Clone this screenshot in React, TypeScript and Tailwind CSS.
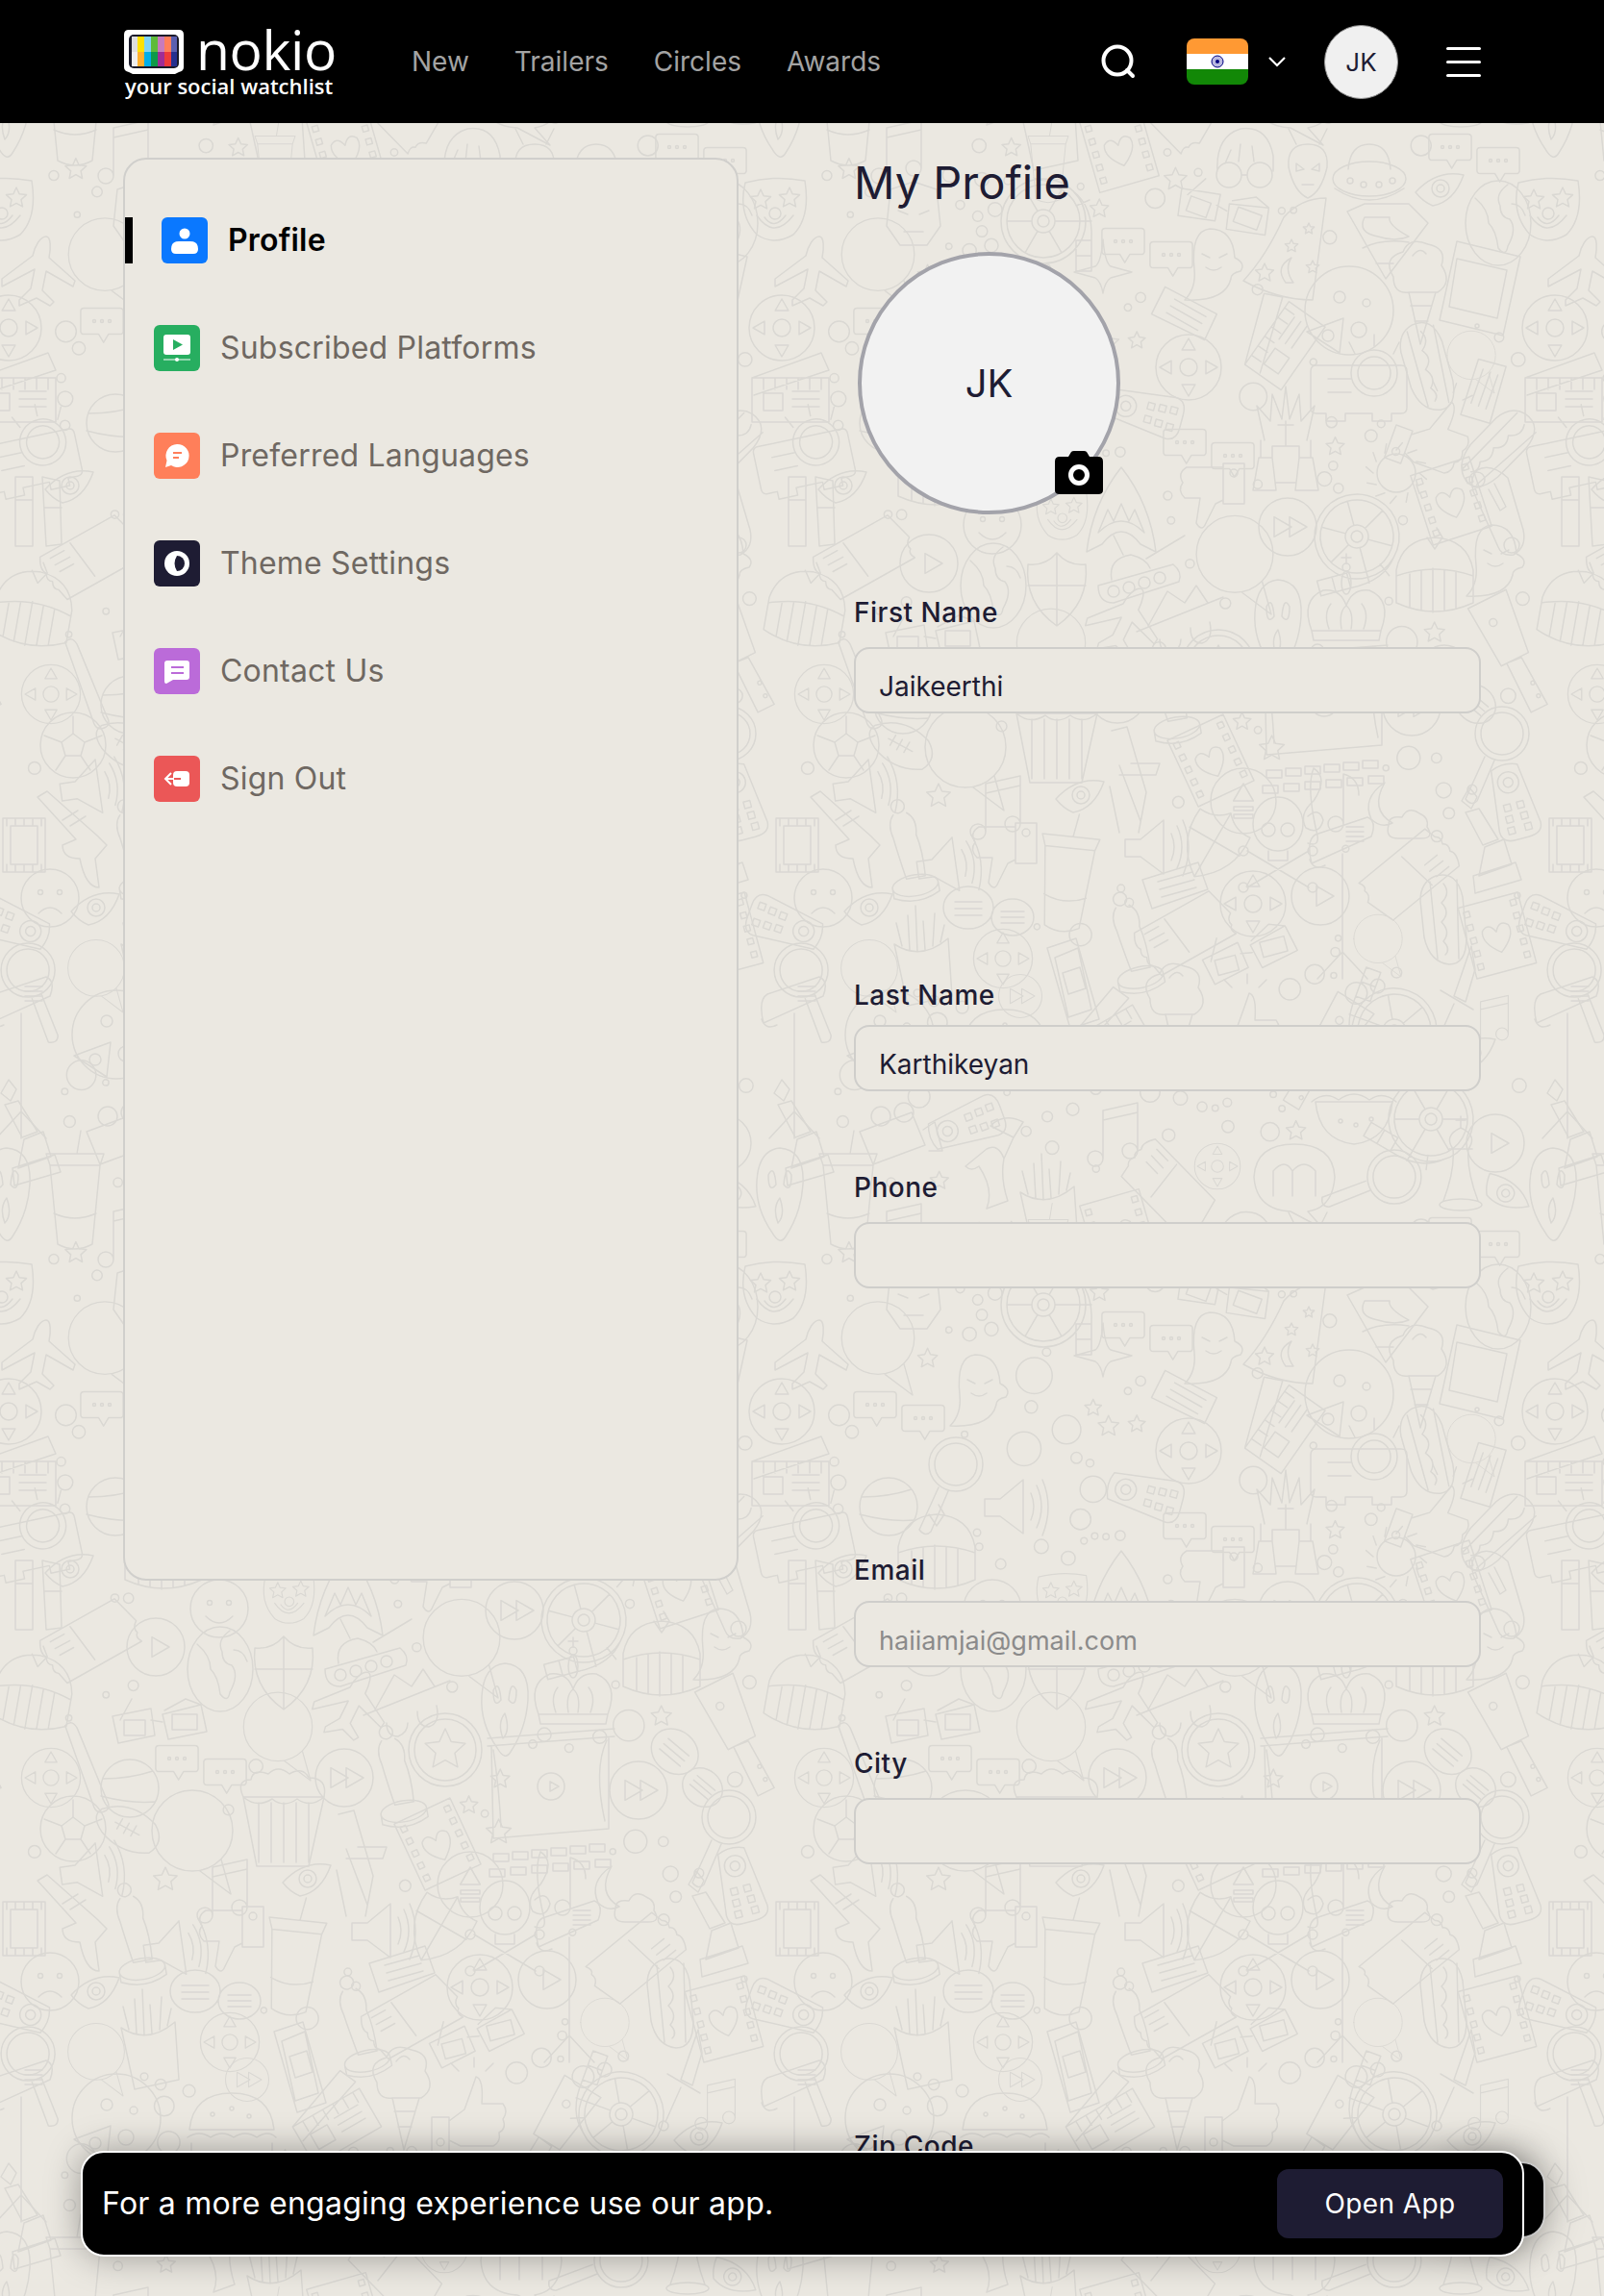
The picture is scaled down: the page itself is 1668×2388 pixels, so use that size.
import React from "react";

// path helpers for the wallpaper doodles
const c = (x: number, y: number, r: number) =>
  `M${x - r} ${y}a${r} ${r} 0 1 0 ${2 * r} 0a${r} ${r} 0 1 0 ${-2 * r} 0Z`;
const e = (x: number, y: number, rx: number, ry: number) =>
  `M${x - rx} ${y}a${rx} ${ry} 0 1 0 ${2 * rx} 0a${rx} ${ry} 0 1 0 ${-2 * rx} 0Z`;
const r = (x: number, y: number, w: number, h: number) => `M${x} ${y}h${w}v${h}h${-w}Z`;
const star = (x: number, y: number, R: number) => {
  const pts: string[] = [];
  for (let i = 0; i < 10; i++) {
    const a = (i * Math.PI) / 5 - Math.PI / 2;
    const q = i % 2 ? R * 0.48 : R;
    pts.push(`${(x + q * Math.cos(a)).toFixed(1)} ${(y + q * Math.sin(a)).toFixed(1)}`);
  }
  return `M${pts.join("L")}Z`;
};
const tri = (x: number, y: number, s: number, a: number) => {
  const pts = [0, 1, 2].map((i) => {
    const t = a + (i * 2 * Math.PI) / 3;
    return `${(x + s * Math.cos(t)).toFixed(1)} ${(y + s * Math.sin(t)).toFixed(1)}`;
  });
  return `M${pts.join("L")}Z`;
};
const holes = (x: number, y: number, n: number, step: number) =>
  Array.from({ length: n }, (_, i) => r(x, y + i * step, 6, 6)).join("");
const spokes = (R: number, n: number) =>
  Array.from({ length: n }, (_, i) => {
    const t = (i * 2 * Math.PI) / n;
    return `M${(12 * Math.cos(t)).toFixed(1)} ${(12 * Math.sin(t)).toFixed(1)}L${(R * Math.cos(t)).toFixed(1)} ${(R * Math.sin(t)).toFixed(1)}`;
  }).join("");
const hlines = (x: number, y: number, w: number, n: number, step: number) =>
  Array.from({ length: n }, (_, i) => `M${x} ${y + i * step}h${w}`).join("");
const vlines = (x: number, y: number, h: number, n: number, step: number) =>
  Array.from({ length: n }, (_, i) => `M${x + i * step} ${y}v${h}`).join("");

const bubble = (x: number, y: number, s: number) =>
  `M${x - 22 * s} ${y - 16 * s}h${44 * s}q${4 * s} 0 ${4 * s} ${4 * s}v${24 * s}q0 ${4 * s} ${-4 * s} ${4 * s}h${-14 * s}l${-6 * s} ${10 * s}l${-6 * s} ${-10 * s}h${-18 * s}q${-4 * s} 0 ${-4 * s} ${-4 * s}v${-24 * s}q0 ${-4 * s} ${4 * s} ${-4 * s}Z`;

const MOTIFS: Record<string, string> = {
  chats: bubble(-24, -6, 0.85) + bubble(26, 8, 0.85) + c(-32, -6, 1.5) + c(-24, -6, 1.5) + c(-16, -6, 1.5) + c(18, 8, 1.5) + c(26, 8, 1.5) + c(34, 8, 1.5),
  lines2: e(-22, -4, 26, 22) + e(24, 6, 22, 19) + hlines(-36, -10, 28, 3, 7) + hlines(12, 0, 24, 3, 6),
  reel: c(0, 0, 44) + c(0, 0, 38) + c(0, 0, 12) + c(0, 0, 6) + spokes(38, 6) + "M30 -32Q52 -16 50 20V52H34V20M34 0H50M34 -16L48 -22M34 20H50M34 36H50",
  clapper: r(-40, -8, 80, 46) + "M-40 -8L32 -34L40 -16L-38 10" + hlines(2, 6, 28, 3, 8) + r(-28, 8, 20, 18) + vlines(-28, -8, 12, 6, 12),
  plane: "M8 -38C13 -38 13 -26 11 -16L38 8L36 14L8 -2L4 18L16 30L12 34L-2 26L-20 34L-20 28L-8 16L-4 -4L-38 14L-38 6L-6 -18C-4 -28 2 -38 8 -38Z",
  clown: "M-30 -26Q0 -34 32 -28Q38 10 20 28Q0 40 -18 28Q-38 6 -30 -26Z" + star(-14, -8, 11) + star(16, -10, 11) + c(1, 6, 6) + "M-18 8Q0 34 20 8M-10 10Q0 24 12 8",
  dpad: c(0, 0, 34) + c(0, 0, 9) + tri(0, -22, 8, -Math.PI / 2) + tri(0, 22, 8, Math.PI / 2) + tri(-22, 0, 8, Math.PI) + tri(22, 0, 8, 0),
  remote: "M-38 -14L26 -22Q38 -22 38 -6L38 8Q38 22 26 22L-38 14Q-44 0 -38 -14Z" + c(-22, 0, 11) + c(-22, 0, 5) + r(0, -10, 7, 7) + r(12, -11, 7, 7) + r(24, -12, 7, 7) + r(0, 4, 7, 7) + r(12, 5, 7, 7) + r(24, 6, 7, 7),
  thumbDown: r(10, -32, 22, 42) + c(21, -22, 4) + "M10 -28H-28Q-38 -22 -32 -12Q-38 -4 -30 4H-14L-18 30Q-12 40 -8 30L2 10L10 6",
  thumbUp: r(-34, 6, 18, 36) + c(-25, 32, 4) + "M-16 10L0 -2Q8 -24 12 -36Q20 -34 18 -8H40Q46 0 40 8Q44 18 36 22Q38 32 30 36H-4L-16 30" + "M10 -46V-56M-6 -42L-14 -50M22 -42L30 -50",
  popcorn: "M-42 -16L-28 56L26 56L42 -16Z" + vlines(-26, -10, 62, 5, 13) + "M-42 -16Q-50 -34 -34 -34Q-32 -46 -16 -40Q-6 -50 6 -40Q20 -48 26 -36Q46 -36 42 -16Q28 -4 14 -14Q0 -4 -12 -14Q-28 -4 -42 -16Z",
  cup: "M-26 -26L-18 56Q0 66 18 56L26 -26ZM-30 -38H30L26 -26H-26ZM2 -38L6 -62M-22 24Q0 34 22 24",
  oscar: c(0, -50, 7) + "M-6 -42Q-14 -34 -10 -18Q-8 0 -4 26H16Q18 0 14 -18Q18 -34 8 -42" + e(4, 34, 24, 11) + "M-20 34V44Q4 56 28 44V34",
  ticket23: "M-50 -12L36 -34L52 -6Q46 0 50 6Q46 10 52 16L-34 38L-40 26Q-46 24 -44 16Q-50 14 -48 6Q-54 2 -50 -12Z" + "M-16 -18L0 22M-40 -8L-24 -12M-37 0L-20 -4M-34 8L-18 4",
  ticket: "M-34 -8L24 -26L34 2L-24 22Z" + "M-18 -6L18 -16M-16 2L20 -8M-14 10L22 0",
  globe: e(0, 0, 34, 44) + "M-24 -26Q-10 -14 -10 0Q-2 8 0 26Q8 36 10 24Q20 6 12 -4Q2 -6 2 -18Q-4 -30 10 -40M14 -20Q24 -20 28 -8",
  shield: "M-30 -24Q-12 -22 0 -36Q12 -22 30 -24Q34 16 0 40Q-34 16 -30 -24ZM0 -36V40M-30 -2H30",
  crown: "M-34 30H34L36 20H-36ZM-36 20Q-48 -12 -24 -22Q-6 -24 0 -6Q6 -24 24 -22Q48 -12 36 20M-18 18Q-24 2 -16 -8M18 18Q24 2 16 -8M-5 18Q-8 0 0 -6Q8 0 5 18" + e(0, -30, 5, 12) + c(0, -46, 4) + "M0 -50V-60M-5 -56H5",
  cleaver: "M-18 -48L24 -62L38 6L8 16ZM14 14L30 10L50 62L32 68Z" + c(38, 38, 2) + c(42, 52, 2) + c(6, -30, 4),
  magnifier: c(0, -14, 28) + c(0, -14, 22) + "M-18 10L-38 54Q-32 62 -26 56L-8 14",
  film: r(-22, -28, 44, 56) + r(-14, -20, 28, 40) + vlines(-18, -28, 8, 5, 9) + vlines(-18, 20, 8, 5, 9),
  filmHeart: r(-32, -38, 64, 76) + holes(-28, -32, 5, 14) + holes(22, -32, 5, 14) + "M0 -4Q-6 -16 -14 -8Q-18 4 0 18Q18 4 14 -8Q6 -16 0 -4Z",
  ghost: "M0 -38Q24 -38 26 -8Q38 -2 32 6Q22 8 22 14Q16 38 -26 36Q-14 24 -16 4Q-20 -36 0 -38ZM-8 -12L0 -8M18 -12L10 -8M-4 2Q4 8 12 2",
  scream: "M0 -48Q26 -46 24 -10Q22 20 6 44Q0 54 -8 40Q-26 14 -24 -14Q-22 -46 0 -48ZM-12 -20Q-6 -32 -4 -10Q-12 0 -12 -20ZM12 -20Q6 -32 4 -10Q12 0 12 -20ZM0 4Q-8 14 -2 30Q6 22 0 4Z",
  speaker: "M-30 -8L-14 -8L10 -28V28L-14 10H-30ZM18 -14Q24 0 18 14M24 -22Q34 0 24 22M30 -28Q42 0 30 30",
  note: "M-18 -24L18 -32V18M-18 -24V26" + c(-26, 26, 8) + c(10, 18, 8) + "M-18 -14L18 -22",
  note1: "M-2 26V-26Q14 -22 14 -4" + c(-10, 26, 8),
  treble: "M0 -40Q16 -30 0 -6Q-16 8 -8 22Q6 30 10 14Q6 0 -6 10M0 -40Q-8 -20 4 30Q6 42 -6 38",
  eye: "M-26 2Q-4 -22 24 -16Q14 12 -8 16Q-18 12 -26 2Z" + c(0, -2, 9) + c(0, -2, 4),
  soccer: c(0, 0, 34) + "M0 -12L12 -3L8 11H-8L-12 -3ZM0 -12V-30M12 -3L30 -10M8 11L18 26M-8 11L-18 26M-12 -3L-30 -10",
  football: "M-32 -8Q-6 -28 26 -12Q42 2 30 18Q2 30 -24 14Q-40 2 -32 -8ZM-14 0L14 4M-8 -6L-10 6M0 -4L-2 8M8 -4L6 8",
  tennis: c(0, 0, 30) + "M-28 -10Q0 -10 24 -18M-30 8Q0 16 26 14",
  bat: "M-10 -46Q-2 -52 2 -42L22 36Q26 46 18 48Q10 50 8 42Z",
  play: c(0, 0, 30) + tri(2, 0, 12, 0),
  ff: c(0, 0, 30) + tri(-8, 0, 12, 0) + tri(8, 0, 12, 0),
  eject: c(0, 0, 34) + tri(0, -6, 12, -Math.PI / 2) + r(-10, 6, 20, 4) + r(-10, 14, 20, 4),
  starCircle: c(0, 0, 38) + c(0, 0, 32) + star(0, 0, 22),
  projector: "M-44 -18H44Q50 -18 50 -12V26Q50 32 44 32H34V40H14V32H-14V40H-34V32H-44Q-50 32 -50 26V-12Q-50 -18 -44 -18Z" + c(16, -10, 24) + c(16, -10, 17) + "M-32 -4H-8M-32 10H-8M-10 -42L-4 -30M16 -50V-38M42 -42L36 -30",
  hotdog: "M-8 -46Q14 -52 20 -24L24 18Q24 46 6 46Q-14 44 -20 18L-24 -20Q-24 -40 -8 -46ZM-14 -40L-6 40M14 -42L16 40M0 -38Q8 -28 -2 -18Q8 -8 -2 2Q8 12 0 22Q8 30 2 36",
  icecream: "M-10 6L2 60L18 6ZM-8 20L14 20M-4 36L10 36" + "M-26 -10Q-38 -30 -16 -36Q-10 -52 10 -44Q30 -40 24 -22Q36 -4 20 6H-10Q-26 8 -26 -10ZM-6 -32Q2 -42 8 -34",
  stage: "M-66 -62L66 -72M-66 -54L66 -64M-62 -54L-60 42L60 32L60 -62M-60 -50Q-54 -10 -52 30M58 -60Q44 -30 56 24" + c(0, -12, 14) + tri(2, -12, 6, 0) + Array.from({ length: 6 }, (_, i) => r(-60 + i * 20, 58 - i * 2, 16, 8) + r(-64 + i * 22, 74 - i * 2, 16, 8)).join(""),
  spot: "M-34 -66Q-44 -60 -38 -36L24 -64Q30 -80 20 -84ZM-40 -40Q-36 -28 -24 -34M-6 -46V56M-6 56L-32 84M-6 56L20 84M-6 56V84" + hlines(-2, -74, 18, 4, 5),
  skull: e(0, -24, 26, 28) + c(-10, -18, 7) + c(10, -18, 7) + "M-10 4V14H10V4M-32 4L32 42M32 4L-32 42" + c(-36, 4, 5) + c(36, 4, 5) + c(-36, 42, 5) + c(36, 42, 5),
  glasses: "M-46 -12L-6 -20L-2 8L-40 16ZM6 -14L46 -24L52 4L12 12ZM-6 -8L6 -6M-38 -8L-26 -30M8 -18L30 -30L46 -24" + r(-34, -8, 22, 16) + r(16, -14, 26, 16),
  sun: c(0, 0, 20) + Array.from({ length: 12 }, (_, i) => {
    const t = (i * Math.PI) / 6;
    return `M${(24 * Math.cos(t)).toFixed(1)} ${(24 * Math.sin(t)).toFixed(1)}L${(32 * Math.cos(t + 0.2)).toFixed(1)} ${(32 * Math.sin(t + 0.2)).toFixed(1)}`;
  }).join(""),
  helmet: "M-40 26V-8Q-34 -40 0 -42Q34 -40 40 -8V26Q0 44 -40 26ZM-40 -2Q0 -16 40 -2M-26 -4V30M-14 -8V34M-2 -10V36M10 -8V34M22 -6V32M-8 -42L0 -30L8 -42L2 -52",
  speech: c(0, -6, 42) + "M30 24L40 60L8 36",
  tank: "M-44 14L34 -8Q44 0 40 10L-28 32Q-44 32 -44 14Z" + c(-28, 20, 6) + c(-12, 16, 6) + c(4, 11, 6) + c(20, 6, 6) + "M-30 8Q-34 -14 -10 -18Q6 -14 10 -4M6 -14L46 -38M-18 -18L-28 -38",
  pizza: c(0, 0, 46) + "M-6 8L-44 22L-10 44Z" + c(-22, 26, 6) + c(-10, -14, 6) + c(10, 20, 8) + c(18, -8, 4),
  trophy: "M-8 -36L12 -4L-4 2L-22 -32ZM-18 -58L-10 -48L-16 -36L-26 -44ZM-2 4L18 -4L26 22L-8 34ZM-14 34L30 20L36 38L-12 52Z",
  gun: "M-34 -44L-24 -50L28 -4L38 6L26 20L30 50Q16 50 10 20Q-8 20 -8 6L6 0Z" + "M-8 -20L8 -30M0 -14L16 -24",
  chess: e(0, 36, 22, 6) + "M-18 32Q-6 0 -8 -22H8Q6 0 18 32M-12 -22H12M-8 -22Q-18 -36 0 -44Q18 -36 8 -22M0 -44V-56M-5 -52H5",
  throne: "M-34 48L-28 14H-14L-10 48ZM34 48L28 14H14L10 48ZM-10 40H10M-14 14V2H14V14M-26 14V-4M26 14V-4M0 2V-24M-8 -20H8M-22 -4L-30 -40L-16 -24L-14 -52L-4 -26L0 -60L4 -26L14 -52L16 -24L30 -40L22 -4",
  ufo: e(0, 6, 38, 18) + "M-22 -4Q-20 -30 0 -30Q20 -30 22 -4M-36 16Q0 40 36 16" + c(-20, 8, 3) + c(-6, 12, 3) + c(10, 12, 3) + c(24, 8, 3),
  alien: "M0 -26Q22 -26 20 -2Q14 24 0 30Q-14 24 -20 -2Q-22 -26 0 -26ZM-12 -26L-20 -42M12 -26L20 -42M-12 -6L-4 0L-12 2ZM12 -6L4 0L12 2ZM-6 16H6",
  harry: c(-16, 16, 13) + c(16, 16, 13) + "M-3 16H3M-28 12Q-30 -24 -4 -32Q24 -36 30 -4L30 12M-14 -10L-20 4M-4 -16L-6 2M8 -14L10 2",
  tablet: "M-24 -54L42 -38L24 44L-42 28ZM-24 -36L28 -24L18 26L-32 14Z" + c(-3, 34, 2),
  phone: "M-18 -40L12 -50L36 34L6 44ZM-10 -30L14 -40L28 24L4 32ZM-2 -14L16 -20L22 2L4 8Z",
  burger: "M-44 0Q-40 -38 0 -38Q40 -38 44 0ZM-46 8Q-34 0 -22 8Q-10 0 2 8Q14 0 26 8Q38 0 46 8M-42 14V30H42V14" + c(-20, -16, 2) + c(0, -22, 2) + c(18, -14, 2),
  fries: "M-28 -6L-14 58L32 48L28 -12Q0 12 -28 -6ZM-20 -4L-26 -28M-12 0L-14 -36M-4 2L-6 -46M4 0L2 -30M12 -4L14 -38M20 -8L24 -26",
  moon: "M-10 -28Q-26 0 -2 14Q-14 20 -24 10Q-34 -12 -10 -28ZM4 30Q-10 30 -6 16Q-6 6 8 8Q14 -4 26 4Q36 8 34 18Q42 30 28 30Z",
  sword: "M24 -58L6 -6L18 0L28 -34ZM-8 -12L26 8M6 2L-10 38" + c(-12, 42, 5),
  car: "M-26 -44Q-12 -52 6 -36L22 18Q26 36 12 44Q0 46 -4 36L-30 -22Q-34 -36 -26 -44Z" + c(-26, -34, 8) + c(10, 34, 8) + "M-8 -30L4 -6L-2 -2L-14 -24",
  pills: r(-24, -38, 18, 72) + "M4 -38L22 -34L24 32L8 34Z" + "M-24 -14H-6M6 -6H24",
  iron: "M-24 -26L0 -34L24 -26L28 12L14 32H-14L-28 12ZM-16 -4L-6 0M16 -4L6 0M-10 18H10",
  spinner: "M0 -34Q2 -10 8 -6L30 0L8 6Q2 10 0 22Q-2 10 -8 6L-30 0L-8 -6Q-2 -10 0 -34Z",
  wizard: "M-44 26Q-20 0 -2 -40Q16 -60 42 -60L28 46Q-8 46 -44 26Z" + star(-22, 18, 10) + star(6, -10, 7) + star(24, -28, 6) + star(28, 12, 7) + "M0 28Q-12 12 6 2Q-2 14 8 28Z",
  superman: "M-36 -28L-18 -36H28L48 -16L4 42ZM-18 -22Q-26 -6 -4 -2Q14 4 28 -2Q6 -14 8 -22ZM-20 10Q0 0 28 4M-6 26H12",
  camera: "M-30 -8L24 -28L38 6L-16 26ZM36 -10L48 -18L56 12L42 12" + c(-8, -24, 10) + c(16, -28, 10),
  hat: "M-46 14L44 -22L-46 14ZM-34 8L-14 -28L4 -16L16 -34L28 -16M-22 22Q-22 36 -10 36Q0 32 0 22M10 10Q10 26 22 26Q34 22 30 4",
  chair: "M-22 -44L-6 -48L14 20L6 62M-2 -10H28L24 2H-14M-24 14L-14 62M-14 -8L8 50",
  poppins: "M-10 -42Q4 -56 24 -46L14 -30ZM14 -30L4 -8M-14 -18Q-2 -24 4 -8Q0 12 8 36L-14 44Q-6 24 -22 0Q-30 6 -36 0Z",
  m: "M-42 -6Q-40 -40 0 -40Q40 -40 42 -6Q40 26 14 30L30 48L-4 30Q-40 28 -42 -6Z" + "M-22 14V-12Q-10 -26 -2 -12V14M-2 -12Q10 -26 22 -12V14",
  bowl: "M-40 -10H40Q36 30 0 34Q-36 30 -40 -10ZM-44 -10Q-30 -22 -16 -12Q0 -24 16 -12Q30 -22 44 -10" + c(-14, 10, 2) + c(2, 14, 2) + c(18, 8, 2),
  smile: c(0, 0, 30) + c(-10, -6, 2.5) + c(10, -6, 2.5) + "M-14 8Q0 22 14 8",
  sad: c(0, 0, 30) + c(-10, -6, 2.5) + c(10, -6, 2.5) + "M-12 16Q0 4 12 16",
  shark: "M0 -48Q30 -10 36 40L20 32Q0 6 -20 32L-36 40Q-30 -10 0 -48ZM-24 20L-14 -4L-8 8L0 -10L8 8L14 -4L24 20Q0 -4 -24 20Z",
};

// [motif, x, y, rotation, scale], tile coords (x 0..804, y 130..1257)
type P = [string, number, number, number?, number?];
const PLACED: P[] = [
  ["filmHeart", 360, 155, -16], ["harry", 490, 166], ["alien", 556, 176], ["ufo", 620, 180], ["chats", 728, 159], ["glasses", 464, 223, 20],
  ["eye", 694, 198], ["clown", 1, 216], ["globe", 754, 232], ["reel", 281, 230], ["wizard", 533, 266], ["superman", 633, 248], ["icecream", 671, 298],
  ["tablet", 735, 305], ["plane", 40, 284], ["ghost", 454, 276], ["chats", 388, 257], ["clapper", 520, 351, -55], ["pizza", 599, 323], ["projector", 609, 398],
  ["hotdog", 680, 382, -10], ["speech", 726, 373, 0, 0.6], ["ticket", 741, 408, -55], ["clapper", 18, 401], ["dpad", 9, 341], ["dpad", 432, 382], ["ticket", 426, 328, 45],
  ["remote", 388, 428, 15], ["chats", 452, 466], ["throne", 533, 462], ["thumbUp", 682, 448, 20], ["hotdog", 752, 466, 50], ["projector", 31, 473, -12], ["sun", 648, 492],
  ["filmHeart", 705, 521, -18], ["car", 758, 533], ["pills", 40, 534], ["ff", 535, 548], ["reel", 607, 558, 75], ["thumbDown", 458, 514], ["shark", 362, 534],
  ["iron", 146, 223], ["note", 136, 157], ["cup", 286, 168, 0, 0.7], ["spinner", 343, 283], ["speech", 109, 270, 0, 0.9], ["eye", 73, 507], ["clown", 300, 534, 0, 0.8], ["chats", 130, 340],
  ["magnifier", 190, 410], ["ghost", 210, 320], ["speaker", 250, 440], ["tennis", 120, 440], ["helmet", 170, 490],
  ["smile", 228, 546], ["ticket23", 93, 578, -15], ["play", 162, 586], ["globe", 229, 609], ["shield", 295, 611], ["tank", 382, 595], ["speech", 480, 582, 0, 0.95],
  ["helmet", 688, 601], ["ghost", 747, 584], ["helmet", 34, 636, 10], ["glasses", 163, 670], ["plane", 365, 647, 15], ["hat", 424, 643], ["scream", 525, 651], ["crown", 596, 636],
  ["cleaver", 747, 678, -8], ["speech", 289, 674, 0, 0.85], ["bat", 84, 712, -8], ["chats", 208, 708], ["oscar", 410, 724, -10], ["starCircle", 463, 693], ["stage", 573, 743],
  ["dpad", 53, 722, 0, 0.9], ["tennis", 135, 733], ["popcorn", 295, 758], ["speech", 200, 783, 0, 1], ["soccer", 76, 775], ["football", 133, 773, 20], ["chair", 374, 804],
  ["filmHeart", 455, 791, -25], ["ff", 358, 722], ["ff", 664, 735], ["magnifier", 758, 777], ["lines2", 716, 712, 40], ["speaker", 93, 819, -8], ["note", 239, 839], ["eye", 320, 829],
  ["eject", 489, 833], ["treble", 562, 839], ["note1", 595, 831], ["moon", 646, 842], ["trophy", 742, 877], ["remote", 770, 835, 75], ["gun", 73, 873], ["film", 25, 879],
  ["oscar", 138, 888, -10], ["speaker", 180, 900, -8], ["thumbDown", 242, 888], ["cup", 306, 908, 6], ["speaker", 396, 881], ["shield", 458, 877, 30], ["skull", 525, 881], ["spot", 598, 934],
  ["ticket23", 663, 911, 155], ["sad", 52, 934], ["eye", 100, 946], ["lines2", 225, 948], ["ticket", 418, 923], ["ticket23", 427, 969, -15], ["dpad", 499, 940], ["play", 569, 932],
  ["hotdog", 697, 957], ["filmHeart", 753, 973, -15], ["remote", 11, 961, 200], ["fries", 154, 988], ["oscar", 371, 984, -12], ["glasses", 494, 998, -15], ["speech", 629, 980, 0, 0.6],
  ["speech", 100, 1011, 0, 0.7], ["dpad", 239, 997, 0, 0.9], ["phone", 303, 1026], ["ff", 257, 1036, 0, 0.75], ["magnifier", 39, 1019, -45], ["icecream", 418, 1049], ["thumbUp", 483, 1069],
  ["cleaver", 562, 1076, 50], ["reel", 646, 1072, 200], ["sword", 702, 1042], ["note", 750, 1061, 0, 0.8], ["burger", 241, 1088], ["spot", 28, 1100], ["pizza", 121, 1076], ["clapper", 343, 1072, -30], ["eye", 727, 1097],
  ["trophy", 27, 1181, 0, 1], ["camera", 120, 1185], ["remote", 202, 1169, -20], ["poppins", 236, 1213], ["note", 361, 1179], ["bowl", 604, 1156], ["reel", 684, 1164, 120], ["play", 751, 1189],
  ["ticket23", 412, 1234, 60], ["dpad", 462, 1213, 0, 0.7], ["m", 542, 1230], ["magnifier", 636, 1234, 45], ["chess", 715, 1217], ["scream", 7, 1242], ["cup", 78, 1238], ["fries", 285, 1246], ["eye", 760, 1242, 60],
];

const TW = 804;
const TH = 1127;
const Y0 = 130;

function fillers() {
  let s = 12345;
  const rnd = () => (s = (s * 16807) % 2147483647) / 2147483647;
  const taken = PLACED.map((p) => [p[1], p[2], 36 * (p[4] ?? 1)]);
  let d = "";
  for (let i = 0; i < 3000; i++) {
    const x = rnd() * TW;
    const y = Y0 + rnd() * TH;
    const k = rnd();
    const q = k < 0.3 ? 9 + rnd() * 5 : k < 0.75 ? 3 + rnd() * 5 : 9 + rnd() * 10;
    const ok = taken.every(([a, b, m]) => {
      const dx = Math.min(Math.abs(a - x), TW - Math.abs(a - x));
      const dy = Math.min(Math.abs(b - y), TH - Math.abs(b - y));
      return Math.hypot(dx, dy) > m + q + 4;
    });
    if (!ok || x < 20 || x > TW - 20 || y < Y0 + 20 || y > Y0 + TH - 20) continue;
    taken.push([x, y, q]);
    d += k < 0.3 ? star(x, y, q) : c(x, y, q);
  }
  return d;
}

function Wallpaper() {
  const items: React.ReactNode[] = [];
  PLACED.forEach(([name, x, y, rot = 0, sc = 1], i) => {
    const d = MOTIFS[name];
    const xs = x < 90 ? [x, x + TW] : x > TW - 90 ? [x, x - TW] : [x];
    const ys = y < Y0 + 90 ? [y, y + TH] : y > Y0 + TH - 90 ? [y, y - TH] : [y];
    xs.forEach((px) =>
      ys.forEach((py) =>
        items.push(<path key={`${i}-${px}-${py}`} d={d} transform={`translate(${px} ${py}) rotate(${rot}) scale(${sc})`} />)
      )
    );
  });
  return (
    <svg className="absolute inset-0" width={1668} height={2388}>
      <defs>
        <pattern id="doodles" patternUnits="userSpaceOnUse" x={0} y={Y0} width={TW} height={TH}>
          <g transform={`translate(0 ${-Y0})`} fill="none" stroke="#dad8d3" strokeWidth={1.5} strokeLinejoin="round" strokeLinecap="round">
            {items}
            <path d={fillers()} />
          </g>
        </pattern>
      </defs>
      <rect width={1668} height={2388} fill="url(#doodles)" />
    </svg>
  );
}

function Logo() {
  return (
    <div className="flex w-[224px] shrink-0 flex-col">
      <div className="flex h-[50px] items-center">
        <svg className="shrink-0" width={64} height={48} viewBox="0 0 64 48">
          <path d="M6 1H58Q63 1 63 6V40Q63 44 58 45L54 47H10L6 45Q1 44 1 40V6Q1 1 6 1Z" fill="#fff" />
          <rect x={6} y={6} width={52} height={35} rx={5} fill="#1a1a2a" />
          <g>
            <rect x={9} y={8} width={6} height={16} fill="#ddd" /><rect x={9} y={24} width={6} height={15} fill="#eee" />
            <rect x={15} y={8} width={7} height={16} fill="#ffe100" /><rect x={15} y={24} width={7} height={15} fill="#ffb02e" />
            <rect x={22} y={8} width={7} height={16} fill="#7fd4f5" /><rect x={22} y={24} width={7} height={15} fill="#00aee8" />
            <rect x={29} y={8} width={7} height={16} fill="#5ebb3a" /><rect x={29} y={24} width={7} height={15} fill="#0e9a48" />
            <rect x={36} y={8} width={7} height={16} fill="#c77bbd" /><rect x={36} y={24} width={7} height={15} fill="#a02d96" />
            <rect x={43} y={8} width={7} height={16} fill="#ff7f5a" /><rect x={43} y={24} width={7} height={15} fill="#ee3a3a" />
            <rect x={50} y={8} width={6} height={16} fill="#5a5fb0" /><rect x={50} y={24} width={6} height={15} fill="#26308f" />
          </g>
        </svg>
        <span className="-mt-[6px] ml-[12px] whitespace-nowrap font-['Open_Sans',sans-serif] text-[57px] leading-[50px] font-normal tracking-[-0.4px] text-white">nokio</span>
      </div>
      <span className="ml-[2px] -mt-[1px] font-['Open_Sans',sans-serif] text-[22px] leading-[22px] font-semibold whitespace-nowrap text-white">your social watchlist</span>
    </div>
  );
}

function Header() {
  return (
    <header className="relative z-10 flex h-[128px] items-center bg-black pl-[128px]">
      <Logo />
      <nav className="ml-[76px] flex gap-[47px] text-[28px] text-[#a3a3a3]">
        <span>New</span>
        <span>Trailers</span>
        <span>Circles</span>
        <span>Awards</span>
      </nav>
      <div className="ml-auto flex items-center pr-[128px]">
        <svg width={36} height={36} viewBox="0 0 36 36" fill="none" stroke="#fff" strokeWidth={4} strokeLinecap="round">
          <circle cx={17} cy={17} r={14.5} />
          <path d="M27 27L33 33" />
        </svg>
        <svg className="ml-[53px]" width={64} height={48} viewBox="0 0 64 48">
          <clipPath id="flagclip"><rect width={64} height={48} rx={8} /></clipPath>
          <g clipPath="url(#flagclip)">
            <rect width={64} height={16} fill="#ff9933" />
            <rect y={16} width={64} height={16} fill="#fff" />
            <rect y={32} width={64} height={16} fill="#128807" />
            <circle cx={32} cy={24} r={6} fill="#b9b9e0" stroke="#000080" strokeWidth={1} />
            <circle cx={32} cy={24} r={2} fill="#000080" />
          </g>
        </svg>
        <svg className="ml-[21px]" width={18} height={12} viewBox="0 0 18 12" fill="none" stroke="#fff" strokeWidth={2.2}>
          <path d="M1 2L9 10L17 2" />
        </svg>
        <div className="ml-[40px] flex h-[77px] w-[77px] items-center justify-center rounded-full border border-[#999] bg-[#f0f0f0] text-[26px] text-[#1e1c33]">JK</div>
        <div className="ml-[50px] flex w-[36px] flex-col gap-[11px]">
          <div className="h-[3px] rounded-full bg-white" />
          <div className="h-[3px] rounded-full bg-white" />
          <div className="h-[3px] rounded-full bg-white" />
        </div>
      </div>
    </header>
  );
}

const NAV = [
  { label: "Profile", bg: "bg-[#0a78ff]", icon: <><circle cx={24} cy={17} r={5.5} fill="#fff" /><path d="M10 33Q10 25 18 25H30Q38 25 38 33Q38 38 33 38H15Q10 38 10 33Z" fill="#fff" /></> },
  { label: "Subscribed Platforms", bg: "bg-[#27ae60]", icon: <><rect x={10} y={10} width={28} height={21} rx={3} fill="#fff" /><path d="M20 15L30 20.5L20 26Z" fill="#27ae60" /><path d="M10 36H38" stroke="#fff" strokeWidth={1} /><circle cx={24} cy={36} r={2} fill="#fff" /></> },
  { label: "Preferred Languages", bg: "bg-[#ff7f5a]", icon: <><path d="M24 12A12 12 0 1 1 18 34L12 36L13.5 29A12 12 0 0 1 24 12Z" fill="#fff" /><path d="M20 21H29M20 26H26" stroke="#ff7f5a" strokeWidth={2} /></> },
  { label: "Theme Settings", bg: "bg-[#1e1c33]", icon: <><circle cx={24} cy={24} r={13} fill="#fff" /><path d="M24 16A8 8 0 0 1 24 32Q19 24 24 16Z" fill="#1e1c33" /></> },
  { label: "Contact Us", bg: "bg-[#bb6bd9]", icon: <><path d="M14 13H34Q37 13 37 16V30Q37 33 34 33H20L13 37Q11 37 11 35V16Q11 13 14 13Z" fill="#fff" /><path d="M18 20H31M18 26H31" stroke="#bb6bd9" strokeWidth={2} /></> },
  { label: "Sign Out", bg: "bg-[#eb5757]", icon: <><rect x={20} y={16} width={17} height={16} rx={4} fill="#fff" /><path d="M18 18L12 24L18 30M12 24H27" fill="none" stroke="#fff" strokeWidth={2} /><path d="M21 24H28" stroke="#eb5757" strokeWidth={2} /></> },
];

function Sidebar() {
  return (
    <aside className="relative mt-[36px] flex h-[1480px] w-[640px] shrink-0 flex-col gap-[64px] rounded-[24px] border-2 border-[#d0cfcc] bg-[#ebe8e1] pt-[60px]">
      {NAV.map((item, i) => (
        <div key={item.label} className={`relative flex h-[48px] items-center ${i === 0 ? "pl-[38px]" : "pl-[30px]"}`}>
          {i === 0 && <div className="absolute left-0 top-0 h-[48px] w-[8px] bg-black" />}
          <svg className={`h-[48px] w-[48px] rounded-[6px] ${item.bg}`} viewBox="0 0 48 48">{item.icon}</svg>
          <span className={i === 0 ? "ml-[21px] text-[32px] font-semibold tracking-[0.2px] text-black" : "ml-[21px] text-[32px] tracking-[0.2px] text-[#6f6862]"}>{item.label}</span>
        </div>
      ))}
    </aside>
  );
}

function Field({ label, value, muted, top, gap }: { label: string; value?: string; muted?: boolean; top: string; gap: string }) {
  return (
    <div className={`flex flex-col ${top}`}>
      <label className="text-[28px] leading-[34px] font-medium tracking-[0.5px] text-[#1e1c33]">{label}</label>
      <input
        readOnly
        value={value ?? ""}
        className={`h-[69px] w-[652px] rounded-[16px] border-2 border-[#cfcecb] bg-[#ebe8e1] pl-[24px] pt-[13px] outline-none ${gap} ${muted ? "text-[27px] text-[#8b8b8b]" : "text-[28px] text-[#1e1c33]"}`}
      />
    </div>
  );
}

function ProfileForm() {
  return (
    <section className="ml-[120px] flex w-[652px] flex-col">
      <h1 className="mt-[32px] text-[47px] leading-[60px] text-[#1e1c33]">My Profile</h1>
      <div className="relative ml-[4px] mt-[42px] flex h-[273px] w-[273px] items-center justify-center rounded-full border-4 border-[#a3a3aa] bg-[#f2f2f2] text-[40px] text-[#1e1c33]">
        JK
        <svg className="absolute left-[201px] top-[203px]" width={50} height={46} viewBox="0 0 50 46">
          <path d="M5 6H14L17 1Q18 0 20 0H30Q32 0 33 1L36 6H45Q50 6 50 11V41Q50 45 45 45H5Q0 45 0 41V11Q0 6 5 6Z" fill="#000" />
          <circle cx={25} cy={25} r={8.5} fill="none" stroke="#fff" strokeWidth={5} />
        </svg>
      </div>
      <Field top="mt-[85px]" gap="mt-[19px]" label="First Name" value="Jaikeerthi" />
      <Field top="mt-[276px]" gap="mt-[14px]" label="Last Name" value="Karthikeyan" />
      <Field top="mt-[83px]" gap="mt-[19px]" label="Phone" />
      <Field top="mt-[276px]" gap="mt-[15px]" label="Email" value="haiiamjai@gmail.com" muted />
      <Field top="mt-[83px]" gap="mt-[19px]" label="City" />
      <Field top="mt-[276px]" gap="mt-[17px]" label="Zip Code" />
    </section>
  );
}

function AppBanner() {
  return (
    <>
      <div className="absolute left-[1500px] top-[2248px] z-20 h-[80px] w-[107px] rounded-[24px] border-2 border-[#d8d8d8] bg-black shadow-[0_0_40px_rgba(0,0,0,0.35)]" />
      <div className="absolute left-[84px] top-[2237px] z-20 flex h-[110px] w-[1501px] items-center justify-between rounded-[24px] border-2 border-white bg-black pl-[20px] pr-[20px] shadow-[0_0_36px_rgba(0,0,0,0.35)]">
        <span className="text-[32px] tracking-[0.25px] text-white">For a more engaging experience use our app.</span>
        <button className="h-[72px] w-[235px] rounded-[12px] bg-[#1e1c33] text-[28px] tracking-[0.4px] text-white">Open App</button>
      </div>
    </>
  );
}

export default function App() {
  return (
    <div className="relative h-[2388px] w-[1668px] overflow-hidden bg-[#ebe8e1] font-['Inter',sans-serif]">
      <Wallpaper />
      <Header />
      <main className="relative flex pl-[128px]">
        <Sidebar />
        <ProfileForm />
      </main>
      <AppBanner />
    </div>
  );
}
